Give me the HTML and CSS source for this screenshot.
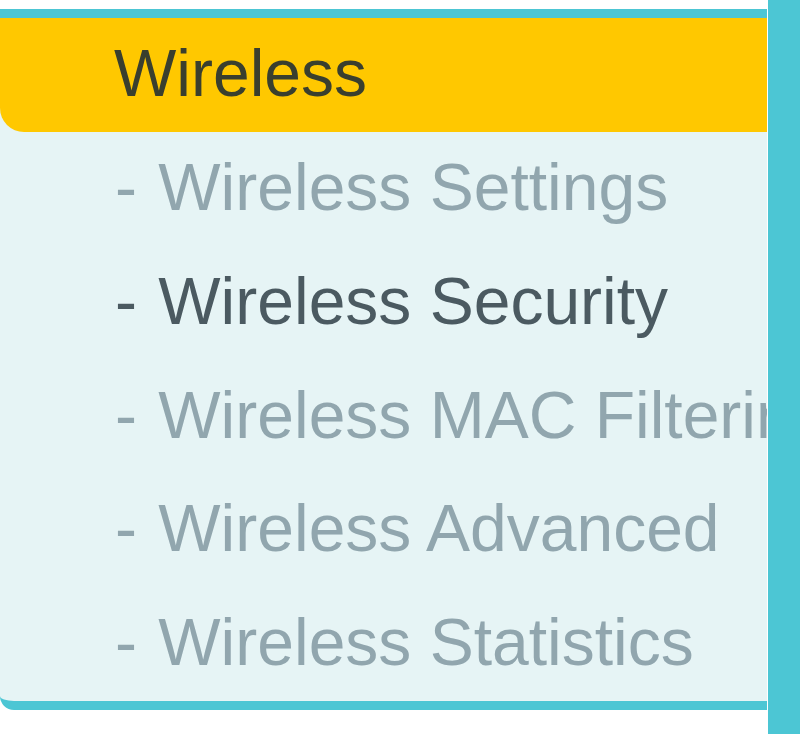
FILE: index.html
```html
<!DOCTYPE html>
<html>
<head>
<meta charset="utf-8">
<link rel="stylesheet" href="styles.css">
</head>
<body>
<div class="frame">
  <div class="main">
    <div class="menu">
      <div class="menu-head">Wireless</div>
      <ul class="submenu">
        <li class="item"><span class="dash">-</span> Wireless Settings</li>
        <li class="item active"><span class="dash">-</span> Wireless Security</li>
        <li class="item"><span class="dash">-</span> Wireless MAC Filtering</li>
        <li class="item"><span class="dash">-</span> Wireless Advanced</li>
        <li class="item"><span class="dash">-</span> Wireless Statistics</li>
      </ul>
    </div>
  </div>
  <div class="side-bar"></div>
</div>
</body>
</html>
```

FILE: styles.css
```css
html, body {
  margin: 0;
  padding: 0;
  background: #ffffff;
  height: 734px;
  overflow: hidden;
}

.frame {
  display: flex;
  height: 734px;
  font-family: "Liberation Sans", Arial, sans-serif;
}

.main {
  width: 767px;
  padding-top: 9px;
  overflow: hidden;
}

.menu {
  border-top: 9px solid #4cc6d4;
  border-bottom: 9px solid #4cc6d4;
  border-bottom-left-radius: 14px;
  background: #e6f4f5;
  overflow: hidden;
}

.menu-head {
  height: 114px;
  line-height: 110px;
  background: #ffc800;
  color: #3a3f2e;
  font-size: 66px;
  padding-left: 114px;
  border-bottom-left-radius: 24px;
  white-space: nowrap;
}

.submenu {
  list-style: none;
  margin: 0;
  padding: 0;
}

.item {
  height: 113.75px;
  line-height: 110px;
  font-size: 66px;
  padding-left: 115px;
  color: #91a6ae;
  white-space: nowrap;
  overflow: hidden;
}

.dash {
  margin-right: 3px;
}

.item.active {
  color: #4b5a61;
}

.side-bar {
  flex: 1;
  margin-left: 1px;
  background: #4cc6d4;
}
```
